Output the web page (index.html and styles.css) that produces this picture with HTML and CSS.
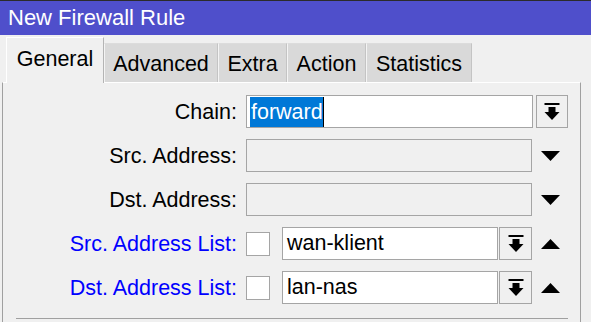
FILE: index.html
```html
<!DOCTYPE html>
<html lang="en">
<head>
    <meta charset="UTF-8">
    <title>New Firewall Rule</title>
    <link rel="stylesheet" href="styles.css">
</head>
<body>

<div class="window">
    <div class="titlebar">New Firewall Rule</div>

    <div class="tabs">
        <div class="tab active tab-general">General</div>
        <div class="tab tab-advanced">Advanced</div>
        <div class="tab tab-extra">Extra</div>
        <div class="tab tab-action">Action</div>
        <div class="tab tab-stats">Statistics</div>
    </div>

    <div class="panel">
        <div class="form">
            <div class="label">Chain:</div>
            <div class="field">
                <div class="input chain-input"><span class="selected">forward</span><span class="caret"></span></div>
                <div class="btn chain-btn">
                    <svg width="16" height="18" viewBox="0 0 16 18"><rect x="0.5" y="0" width="15" height="2"/><rect x="4.5" y="4" width="7" height="5"/><polygon points="0.5,9 15.5,9 8,17"/></svg>
                </div>
            </div>

            <div class="label">Src. Address:</div>
            <div class="field">
                <div class="input disabled addr-input"></div>
                <div class="arrow">
                    <svg width="19" height="10" viewBox="0 0 19 10"><polygon points="0,0 19,0 9.5,10"/></svg>
                </div>
            </div>

            <div class="label">Dst. Address:</div>
            <div class="field">
                <div class="input disabled addr-input"></div>
                <div class="arrow">
                    <svg width="19" height="10" viewBox="0 0 19 10"><polygon points="0,0 19,0 9.5,10"/></svg>
                </div>
            </div>

            <div class="label blue">Src. Address List:</div>
            <div class="field">
                <div class="check"></div>
                <div class="input list-input">wan-klient</div>
                <div class="btn list-btn">
                    <svg width="16" height="18" viewBox="0 0 16 18"><rect x="0.5" y="0" width="15" height="2"/><rect x="4.5" y="4" width="7" height="5"/><polygon points="0.5,9 15.5,9 8,17"/></svg>
                </div>
                <div class="arrow">
                    <svg width="19" height="10" viewBox="0 0 19 10"><polygon points="0,10 19,10 9.5,0"/></svg>
                </div>
            </div>

            <div class="label blue">Dst. Address List:</div>
            <div class="field">
                <div class="check"></div>
                <div class="input list-input">lan-nas</div>
                <div class="btn list-btn">
                    <svg width="16" height="18" viewBox="0 0 16 18"><rect x="0.5" y="0" width="15" height="2"/><rect x="4.5" y="4" width="7" height="5"/><polygon points="0.5,9 15.5,9 8,17"/></svg>
                </div>
                <div class="arrow">
                    <svg width="19" height="10" viewBox="0 0 19 10"><polygon points="0,10 19,10 9.5,0"/></svg>
                </div>
            </div>
        </div>
        <div class="sep"></div>
    </div>
</div>

</body>
</html>
```

FILE: styles.css
```css
* {
    box-sizing: border-box;
}
body {
    margin: 0;
    background: #f0f0f0;
    font-family: "Liberation Sans", Arial, sans-serif;
    font-size: 21.5px;
    color: #000;
}
.window {
    width: 591px;
    height: 322px;
    overflow: hidden;
}
.titlebar {
    height: 35px;
    background: #4f4fcb;
    border-top: 1px solid #2b2b2b;
    color: #fff;
    padding-left: 8px;
    line-height: 34px;
    font-size: 22px;
}
.tabs {
    display: flex;
    align-items: flex-end;
    height: 45px;
    margin-top: 2px;
    padding-left: 6px;
}
.tab {
    height: 39px;
    display: flex;
    align-items: center;
    justify-content: center;
    background: #d9d9d9;
    border-left: 1px solid #f4f4f4;
    border-top: 1px solid #dcdcdc;
    border-right: 1px solid #c4c4c4;
    padding-top: 2px;
}
.tab.active {
    position: relative;
    z-index: 1;
    height: 46px;
    margin-bottom: -1px;
    background: #f0f0f0;
    border-left: 1px solid #ffffff;
    border-top: 1px solid #ffffff;
    border-right: 1px solid #b4b4b4;
    padding-top: 0;
    padding-bottom: 2px;
}
.tab-general { width: 98px; }
.tab-advanced { width: 114px; }
.tab-extra { width: 69px; }
.tab-action { width: 79px; }
.tab-stats { width: 106px; }

.panel {
    margin-left: 2px;
    width: 579px;
    height: 260px;
    border-left: 1px solid #a0a0a0;
    border-top: 1px solid #ffffff;
    border-right: 1px solid #a0a0a0;
    padding-top: 12px;
}
.form {
    display: grid;
    grid-template-columns: 234px 1fr;
    grid-auto-rows: 33px;
    column-gap: 9px;
    row-gap: 11px;
}
.label {
    display: flex;
    align-items: center;
    justify-content: flex-end;
    padding-top: 1px;
}
.label.blue {
    color: #0000ff;
}
.field {
    display: flex;
    align-items: center;
}
.input {
    height: 33px;
    border: 1px solid #a5a5a5;
    background: #fff;
    display: flex;
    align-items: center;
    padding-left: 4px;
}
.input.disabled {
    background: #f0f0f0;
}
.chain-input {
    width: 287px;
    padding-left: 3px;
}
.selected {
    background: #0078d7;
    color: #fff;
    line-height: 30px;
    padding-left: 1px;
}
.caret {
    width: 1px;
    height: 30px;
    background: #000;
}
.addr-input {
    width: 286px;
}
.list-input {
    width: 216px;
}
.btn {
    height: 33px;
    background: #f0f0f0;
    border: 1px solid #a5a5a5;
    display: flex;
    align-items: center;
    justify-content: center;
}
.chain-btn {
    width: 32px;
    margin-left: 3px;
}
.list-btn {
    width: 33px;
    margin-left: 1px;
}
.arrow {
    width: 19px;
    height: 10px;
    margin-left: 9px;
    display: flex;
}
.check {
    width: 24px;
    height: 24px;
    border: 1px solid #a5a5a5;
    background: #fff;
    margin-right: 12px;
}
.sep {
    height: 1px;
    background: #a0a0a0;
    margin-top: 14px;
    margin-left: 13px;
    width: 552px;
}
```
